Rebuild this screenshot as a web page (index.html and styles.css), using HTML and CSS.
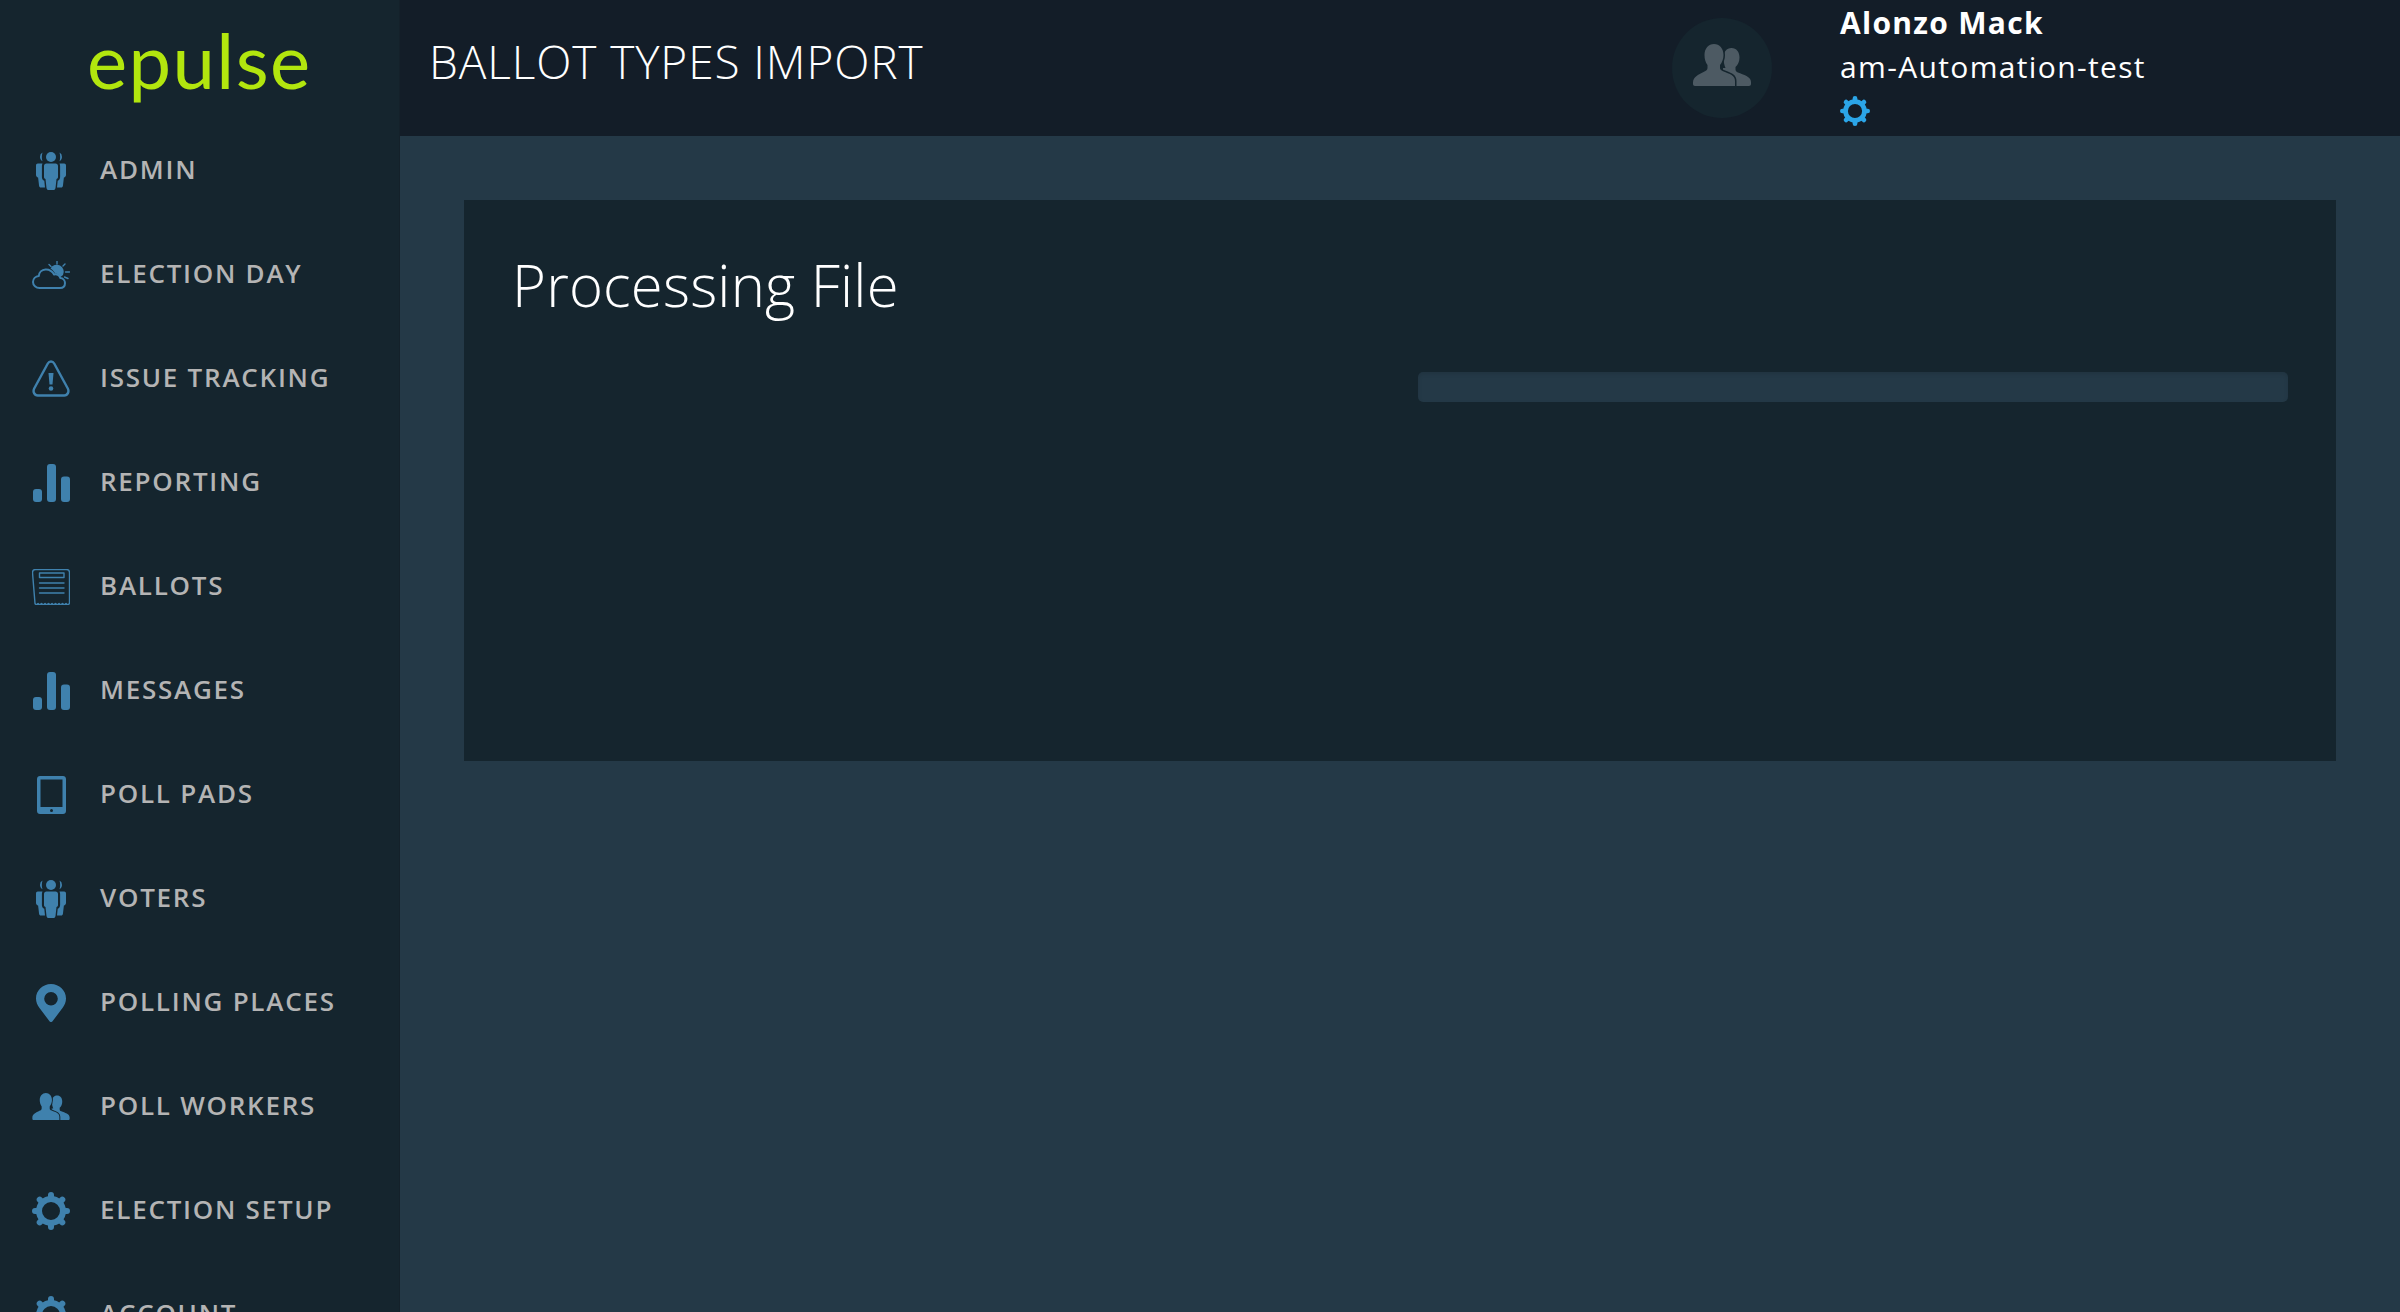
FILE: index.html
```html
<!DOCTYPE html>
<html lang="en">
<head>
  <meta charset="UTF-8">
  <meta name="viewport" content="width=device-width, initial-scale=1">
  <title>Ballot Types Import</title>
  <link rel="stylesheet" href="styles.css">
</head>
<body>

  <!-- shared icons -->
  <svg class="icon-defs" aria-hidden="true">
    <symbol id="i-group" viewBox="0 0 30 38">
      <circle cx="15" cy="5" r="5"/>
      <path d="M6.500 .5a5 5 0 0 0-2.500 4.500c0 1.800 1 3.400 2.500 4.300-.9-2.700-.9-6 0-8.800zM23.500 .5a5 5 0 0 1 2.500 4.500c0 1.800-1 3.400-2.500 4.300.9-2.700.9-6 0-8.800z"/>
      <path d="M10.500 11.500h9c1.500 0 2.500 1 2.500 2.500v11c0 1-.6 1.700-1.500 1.900l-1 9c-.2 1.200-1 2.100-2.200 2.100h-.6l-1.700.5-1.700-.5h-.6c-1.200 0-2-.9-2.200-2.100l-1-9c-.9-.2-1.500-.9-1.500-1.900V14c0-1.500 1-2.500 2.500-2.500z"/>
      <path d="M1.800 11.500h4.700c-.4.700-.6 1.500-.6 2.500v11c0 2 1 3.300 2.400 3.800l.7 6.700H4.800c-1 0-1.500-.6-1.700-1.500l-1-8.500C.8 25.200 0 24.200 0 23v-9.500c0-1.200.7-2 1.800-2z"/>
      <path d="M28.200 11.500h-4.700c.4.700.6 1.500.6 2.500v11c0 2-1 3.300-2.400 3.800l-.7 6.700h4.200c1 0 1.500-.6 1.700-1.500l1-8.500c1.300-.3 2.100-1.300 2.100-2.500v-9.500c0-1.200-.7-2-1.800-2z"/>
    </symbol>
    <symbol id="i-cloud" viewBox="0 0 38 28">
      <path d="M18.500 7.500a7 7 0 0 1 12.500 6.500l-2.500 2c-1-2-3-3.500-5.500-3.500-1-2-2.500-3.800-4.500-5z"/>
      <path class="line thin" d="M25 3V0M19 5.500l-2-2M31 5l2-2M33.500 11h4M32.500 16l3.500 1.500"/>
      <path class="line cloud" d="M7.500 27H28c3 0 5-2 5-5 0-2.700-2-4.800-4.700-5-.8-2.700-3.500-4.300-6.200-3.500C20.300 10.300 17 8.300 13.500 8.500 9.800 8.800 7 11.500 6.800 15 3.500 15.300 1 17.800 1 21c0 3.300 3 6 6.500 6z"/>
    </symbol>
    <symbol id="i-warn" viewBox="0 0 38 38">
      <path class="line" d="M15.800 3.500c1.500-2.600 4.900-2.600 6.400 0l13.600 25c1.600 3-.2 7-3.500 7H5.700c-3.300 0-5.100-4-3.500-7z"/>
      <path d="M16.500 13h5l-1 11.500h-3z"/><circle cx="19" cy="28.500" r="2.300"/>
    </symbol>
    <symbol id="i-bars" viewBox="0 0 37 38">
      <rect x="0" y="25" width="9" height="13" rx="3"/>
      <rect x="14" y="0" width="9" height="38" rx="3"/>
      <rect x="28" y="12.500" width="9" height="25.500" rx="3"/>
    </symbol>
    <symbol id="i-ballot" viewBox="0 0 38 36">
      <path class="line thin" d="M.5 3.500c0-1.700 1.300-3 3-3h31c1.700 0 3 1.300 3 3v31c-1 1.500-2.500 1.500-3.500 0-1 1.500-2.500 1.500-3.500 0-1 1.500-2.500 1.500-3.500 0-1 1.500-2.500 1.500-3.500 0-1 1.500-2.500 1.500-3.500 0-1 1.500-2.500 1.500-3.500 0-1 1.500-2.500 1.500-3.500 0-1 1.500-2.500 1.500-3.500 0-1 1.500-2.500 1.500-3.500 0-1 1.500-2 1.500-3 0z"/>
      <path class="line thin" d="M7.500 4h24.500v4.500H7.500zM7.500 14h24.500M7.500 19h24.500M7.500 24h24.500"/>
    </symbol>
    <symbol id="i-tablet" viewBox="0 0 29 38">
      <path fill-rule="evenodd" d="M3 0h23c1.700 0 3 1.300 3 3v32c0 1.700-1.300 3-3 3H3c-1.700 0-3-1.300-3-3V3c0-1.700 1.300-3 3-3zm.5 3.500v27.500h22V3.500zM14.500 33a1.500 1.500 0 1 0 0 3 1.500 1.500 0 0 0 0-3z"/>
    </symbol>
    <symbol id="i-pin" viewBox="0 0 30 38">
      <path fill-rule="evenodd" d="M15 0c8.300 0 15 6.500 15 14.500 0 3.500-1.300 6.600-3.500 9.500L16.500 37.300c-.8 1-2.200 1-3 0L3.500 24C1.300 21.100 0 18 0 14.500 0 6.500 6.700 0 15 0zm0 8a6.800 6.800 0 1 0 0 13.600A6.800 6.800 0 0 0 15 8z"/>
    </symbol>
    <symbol id="i-people" viewBox="0 0 58 42">
      <path d="M38.500 4c5 0 8 4 8 9.500 0 4-1.600 7.500-4 9.500v2.500c0 1.500 1 2.300 2.500 3 5.500 2.300 13 4 13 9.500V40c0 1.200-.8 2-2 2H30V24h2.500c-1.200-3-2-6-2-10.500C30.500 8 33.500 4 38.500 4z"/>
      <path class="bust-front" d="M21 0c5.500 0 9.500 4.500 9.500 11 0 4-1.500 7.500-3.500 10v3c0 1.500 1 2.300 3 3.200 7 2.800 12 4 12 9.800V42H2c-1.200 0-2-.8-2-2v-1.500c0-6 6-8 11-10.800 2-1 3.500-1.700 3.500-3.700v-3c-2-2.500-3-6-3-10C11.500 4.500 15.500 0 21 0z"/>
    </symbol>
    <symbol id="i-gear" viewBox="0 0 38 38">
      <circle class="line gear-ring" cx="19" cy="19" r="12"/>
      <path class="line gear-teeth" d="M19 3v2M19 33v2M3 19h2M33 19h2M7.700 7.700l1.400 1.400M28.900 28.900l1.400 1.400M7.700 30.300l1.400-1.400M28.900 9.100l1.400-1.400"/>
    </symbol>
  </svg>

  <div class="app">
    <aside class="sidebar">
      <div class="logo">epulse</div>
      <nav class="nav">
        <a class="nav-item"><span class="nav-icon"><svg class="i-group"><use href="#i-group"/></svg></span>ADMIN</a>
        <a class="nav-item"><span class="nav-icon"><svg class="i-cloud"><use href="#i-cloud"/></svg></span>ELECTION DAY</a>
        <a class="nav-item"><span class="nav-icon"><svg class="i-warn"><use href="#i-warn"/></svg></span>ISSUE TRACKING</a>
        <a class="nav-item"><span class="nav-icon"><svg class="i-bars"><use href="#i-bars"/></svg></span>REPORTING</a>
        <a class="nav-item"><span class="nav-icon"><svg class="i-ballot"><use href="#i-ballot"/></svg></span>BALLOTS</a>
        <a class="nav-item"><span class="nav-icon"><svg class="i-bars"><use href="#i-bars"/></svg></span>MESSAGES</a>
        <a class="nav-item"><span class="nav-icon"><svg class="i-tablet"><use href="#i-tablet"/></svg></span>POLL PADS</a>
        <a class="nav-item"><span class="nav-icon"><svg class="i-group"><use href="#i-group"/></svg></span>VOTERS</a>
        <a class="nav-item"><span class="nav-icon"><svg class="i-pin"><use href="#i-pin"/></svg></span>POLLING PLACES</a>
        <a class="nav-item"><span class="nav-icon"><svg class="i-workers"><use href="#i-people"/></svg></span>POLL WORKERS</a>
        <a class="nav-item"><span class="nav-icon"><svg class="i-gear"><use href="#i-gear"/></svg></span>ELECTION SETUP</a>
        <a class="nav-item"><span class="nav-icon"><svg class="i-gear"><use href="#i-gear"/></svg></span>ACCOUNT</a>
      </nav>
    </aside>

    <div class="content">
      <header class="topbar">
        <h1 class="page-title">BALLOT TYPES IMPORT</h1>
        <div class="avatar"><svg class="avatar-icon"><use href="#i-people"/></svg></div>
        <div class="user">
          <div class="user-name">Alonzo Mack</div>
          <div class="user-org">am-Automation-test</div>
          <svg class="user-gear"><use href="#i-gear"/></svg>
        </div>
      </header>

      <main class="main">
        <section class="card">
          <h2 class="card-title">Processing File</h2>
          <div class="progress"></div>
        </section>
      </main>
    </div>
  </div>

</body>
</html>
```

FILE: styles.css
```css
* {
  box-sizing: border-box;
}
html, body {
  height: 100%;
}
body {
  margin: 0;
  overflow: hidden;
  font-family: "Open Sans", sans-serif;
  background-color: #243947;
  color: #fff;
}
.icon-defs {
  display: none;
}
.line {
  fill: none;
  stroke: currentColor;
  stroke-width: 2.4;
  stroke-linecap: round;
  stroke-linejoin: round;
}
.line.thin {
  stroke-width: 1.4;
}
.line.cloud {
  fill: #15252e;
  stroke-width: 2;
}
.gear-ring {
  stroke-width: 6;
}
.gear-teeth {
  stroke-width: 6;
}
.bust-front {
  stroke: #15252e;
  stroke-width: 3;
  paint-order: stroke;
}

.app {
  display: flex;
  height: 1312px;
  overflow: hidden;
}

/* sidebar */
.sidebar {
  width: 400px;
  flex-shrink: 0;
  background-color: #15252e;
  border-right: 1px solid #14212a;
}
.logo {
  height: 117px;
  padding-left: 87px;
  font-family: Lato, sans-serif;
  font-size: 76px;
  line-height: 120px;
  letter-spacing: 1.4px;
  color: #b2e60e;
}
.nav-item {
  display: flex;
  align-items: center;
  height: 104px;
  padding-left: 32px;
  font-size: 26px;
  font-weight: 600;
  letter-spacing: 1.75px;
  color: #b4b4b4;
}
.nav-icon {
  display: flex;
  justify-content: center;
  align-items: center;
  width: 38px;
  height: 38px;
  margin-right: 30px;
  margin-top: 3px;
  color: #3f81ad;
  fill: currentColor;
}
.i-group { width: 30px; height: 38px; }
.i-cloud { width: 38px; height: 28px; }
.i-warn { width: 38px; height: 38px; }
.i-bars { width: 37px; height: 38px; }
.i-ballot { width: 38px; height: 36px; }
.i-tablet { width: 29px; height: 38px; }
.i-pin { width: 30px; height: 38px; }
.i-workers { width: 38px; height: 27px; }
.i-gear { width: 38px; height: 38px; }

/* top bar */
.content {
  flex: 1;
  display: flex;
  flex-direction: column;
}
.topbar {
  display: flex;
  align-items: center;
  height: 136px;
  padding-left: 29px;
  background-color: #131d28;
}
.page-title {
  flex: 1;
  margin: 0 0 15px;
  font-size: 46px;
  font-weight: 300;
  letter-spacing: 0.9px;
}
.avatar {
  display: flex;
  justify-content: center;
  align-items: center;
  width: 100px;
  height: 100px;
  margin-right: 68px;
  border-radius: 50%;
  background-color: #15252e;
}
.avatar-icon {
  width: 58px;
  height: 42px;
  margin-bottom: 6px;
  fill: #4d5a63;
}
.user {
  display: flex;
  flex-direction: column;
  align-items: flex-start;
  width: 560px;
  height: 136px;
}
.user-name {
  margin-top: 2px;
  font-size: 30px;
  font-weight: 700;
  line-height: 42px;
  letter-spacing: 1.3px;
}
.user-org {
  margin-top: 1px;
  font-size: 30px;
  line-height: 44px;
  letter-spacing: 1.35px;
}
.user-gear {
  width: 30px;
  height: 30px;
  margin-top: 7px;
  color: #2ba5e8;
}

/* main area */
.main {
  flex: 1;
  padding: 64px 64px 0;
}
.card {
  height: 561px;
  padding: 47px 48px 0;
  background-color: #15252e;
}
.card-title {
  margin: 0;
  font-size: 58px;
  font-weight: 300;
  line-height: 76px;
  letter-spacing: 0.2px;
}
.progress {
  width: 870px;
  height: 30px;
  margin: 49px 0 0 auto;
  border-radius: 5px;
  background-color: #243947;
  box-shadow: inset 0 2px 4px rgba(0, 0, 0, 0.1);
}
```
